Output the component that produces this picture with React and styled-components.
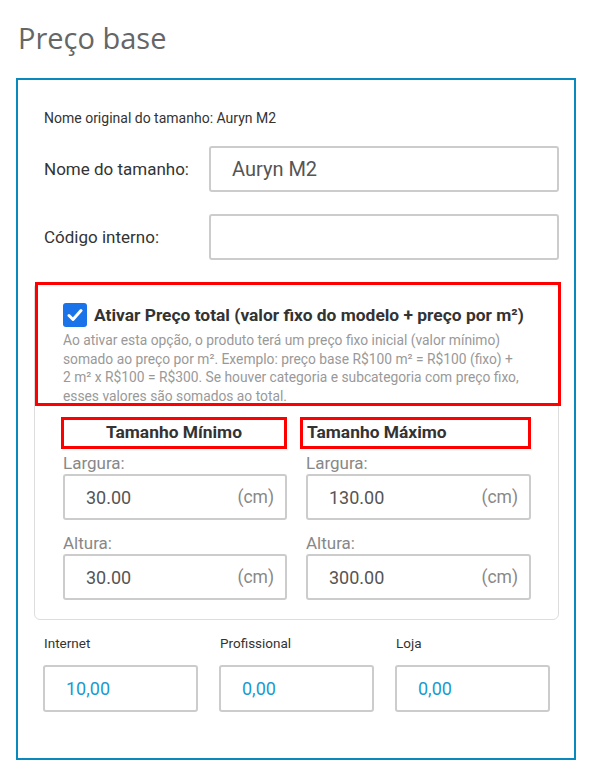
import React from 'react'
import styled, {createGlobalStyle} from 'styled-components'

const Global = createGlobalStyle`
    body {
        margin: 0;
        background: #fff;
        font-family: Roboto, "Liberation Sans", sans-serif;
    }
`

const Page = styled.div`
    width: 596px;
    padding: 18px 0 17px 16px;
    box-sizing: border-box;
`

const Title = styled.h1`
    margin: 0 0 20px 2px;
    font-family: "Open Sans", "Noto Sans", sans-serif;
    font-weight: 400;
    font-size: 29px;
    line-height: 40px;
    color: #666;
`

const Box = styled.div`
    width: 560px;
    box-sizing: border-box;
    border: 2px solid #0a8abc;
    padding: 30px 15px 46px 16px;
`

const Original = styled.div`
    padding-left: 10px;
    font-size: 14px;
    line-height: 16px;
    color: #333;
    margin-bottom: 20px;
`

const FieldRow = styled.div`
    display: flex;
    align-items: center;
    padding-left: 10px;
    margin-bottom: 22px;
`

const RowLabel = styled.label`
    width: 165px;
    font-size: 17px;
    color: #333;
`

const TextBox = styled.div`
    box-sizing: border-box;
    flex: ${p => p.grow ? '1 1 auto' : 'none'};
    height: ${p => p.height || 46}px;
    border: 2px solid #ccc;
    border-radius: 3px;
    display: flex;
    align-items: center;
    justify-content: space-between;
    padding: 0 11px 0 ${p => p.pad || 21}px;
    font-size: ${p => p.size || 18}px;
    color: ${p => p.color || '#555'};
`

const Unit = styled.span`
    color: #888;
    font-size: 17.5px;
    margin-top: -1px;
`

const Card = styled.div`
    border: 1px solid #ddd;
    border-radius: 6px;
    padding-bottom: 19px;
`

const OptionBox = styled.div`
    border: 3px solid #f00;
    box-sizing: border-box;
    margin: -1px -3px 0 0;
    padding: 18px 20px 0 25px;
    height: 124px;
`

const CheckRow = styled.div`
    display: flex;
    align-items: center;
    gap: 7px;
`

const Check = styled.span`
    width: 24px;
    height: 24px;
    border-radius: 3px;
    background: #1a73e8;
    display: flex;
    align-items: center;
    justify-content: center;
`

const OptionTitle = styled.span`
    font-size: 17.4px;
    font-weight: 700;
    color: #333;
    line-height: 24px;
    white-space: nowrap;
`

const OptionText = styled.p`
    margin: 4px 0 0;
    max-width: 458px;
    font-size: 13.8px;
    line-height: 18.7px;
    color: #999;
`

const Sizes = styled.div`
    display: grid;
    grid-template-columns: 226px 231px;
    column-gap: 13px;
    margin: 11px 0 0 26px;
`

const Column = styled.div`
    display: flex;
    flex-direction: column;
`

const SizeHead = styled.div`
    box-sizing: border-box;
    height: 32px;
    border: 3px solid #f00;
    font-size: 17.4px;
    font-weight: 700;
    color: #333;
    line-height: 25px;
    text-align: ${p => p.align};
    padding-left: ${p => p.align === 'left' ? 4 : 0}px;
`

const SmallField = styled.div`
    display: flex;
    flex-direction: column;
    padding-left: ${p => p.indent}px;
`

const SizeLabel = styled.div`
    font-size: 17px;
    line-height: 20px;
    color: #888;
    margin: ${p => p.first ? 4 : 13}px 0 1px;
`

const Prices = styled.div`
    display: grid;
    grid-template-columns: repeat(3, 155px);
    column-gap: 21px;
    margin: 15px 0 0 9px;
`

const PriceCell = styled.div`
    display: flex;
    flex-direction: column;
`

const PriceLabel = styled.div`
    font-size: 13.5px;
    line-height: 16px;
    color: #333;
    padding-left: 1px;
    margin-bottom: 14px;
`

const Tick = () => (
    <svg width="16" height="14" viewBox="0 0 16 14">
        <path d="M2 7.5 L6 11.5 L14 2.5" fill="none" stroke="#fff" strokeWidth="3" strokeLinecap="round" strokeLinejoin="round"/>
    </svg>
)

const sizeColumns = [
    {title: 'Tamanho Mínimo', align: 'center', indent: 2, width: '30.00', height: '30.00'},
    {title: 'Tamanho Máximo', align: 'left', indent: 6, width: '130.00', height: '300.00'}
]

const prices = [
    {label: 'Internet', value: '10,00'},
    {label: 'Profissional', value: '0,00'},
    {label: 'Loja', value: '0,00'}
]

export default function App() {
    return (
        <Page>
            <Global/>
            <Title>Preço base</Title>
            <Box>
                <Original>Nome original do tamanho: Auryn M2</Original>
                <FieldRow>
                    <RowLabel>Nome do tamanho:</RowLabel>
                    <TextBox grow size={20} pad={21}>Auryn M2</TextBox>
                </FieldRow>
                <FieldRow>
                    <RowLabel>Código interno:</RowLabel>
                    <TextBox grow/>
                </FieldRow>
                <Card>
                    <OptionBox>
                        <CheckRow>
                            <Check><Tick/></Check>
                            <OptionTitle>Ativar Preço total (valor fixo do modelo + preço por m²)</OptionTitle>
                        </CheckRow>
                        <OptionText>
                            Ao ativar esta opção, o produto terá um preço fixo inicial (valor mínimo)
                            somado ao preço por m². Exemplo: preço base R$100 m² = R$100 (fixo) +
                            2 m² x R$100 = R$300. Se houver categoria e subcategoria com preço fixo,
                            esses valores são somados ao total.
                        </OptionText>
                    </OptionBox>
                    <Sizes>
                        {sizeColumns.map(col => (
                            <Column key={col.title}>
                                <SizeHead align={col.align}>{col.title}</SizeHead>
                                <SmallField indent={col.indent}>
                                    <SizeLabel first>Largura:</SizeLabel>
                                    <TextBox>{col.width}<Unit>(cm)</Unit></TextBox>
                                    <SizeLabel>Altura:</SizeLabel>
                                    <TextBox>{col.height}<Unit>(cm)</Unit></TextBox>
                                </SmallField>
                            </Column>
                        ))}
                    </Sizes>
                </Card>
                <Prices>
                    {prices.map(p => (
                        <PriceCell key={p.label}>
                            <PriceLabel>{p.label}</PriceLabel>
                            <TextBox height={47} pad={21} color="#1a9ad0">{p.value}</TextBox>
                        </PriceCell>
                    ))}
                </Prices>
            </Box>
        </Page>
    )
}
